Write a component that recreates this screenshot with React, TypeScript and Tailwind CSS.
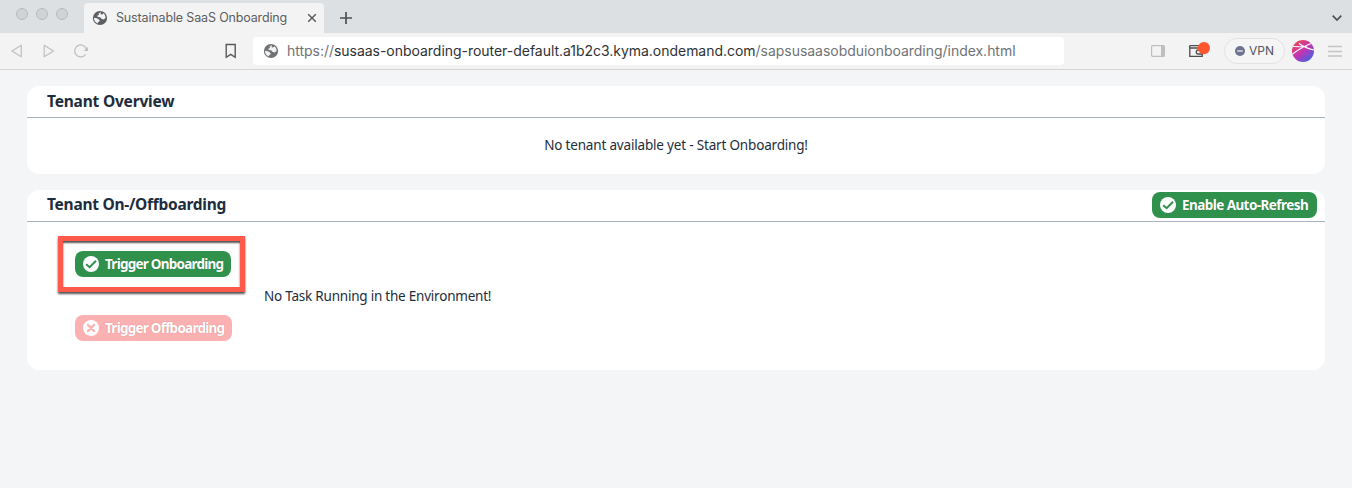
import React from "react";

function Globe({ className }: { className: string }) {
  return (
    <svg viewBox="0 0 16 16" className={className}>
      <circle cx="8" cy="8" r="7.1" fill="currentColor" />
      <path d="M8.8 2.1 L6.5 3.8 L7 5 L5.4 5.6 L5.6 7 L8.2 7.2 L9.4 8.8 L11.4 9.4 L13.7 8 A6 6 0 0 0 11.6 3.2 L10.2 4.6 L8.6 4.2 Z" fill="#f3f3f3" />
      <path d="M2 7.8 L5 8.2 L7.6 10 L7.4 11.6 L6 12.2 L5.8 13.6 A6 6 0 0 1 2 7.8 Z" fill="#f3f3f3" />
    </svg>
  );
}

function StatusIcon({ kind }: { kind: "check" | "cross" }) {
  return (
    <svg viewBox="0 0 16 16" className="size-4 shrink-0">
      <circle cx="8" cy="8" r="8" fill="#fff" />
      {kind === "check" ? (
        <path d="M3.2 8.2 L6.6 11.2 L13 4.8" fill="none" stroke="#30914c" strokeWidth="2" />
      ) : (
        <path d="M5 5 L11 11 M11 5 L5 11" fill="none" stroke="#fbb0b1" strokeWidth="2.4" strokeLinecap="round" />
      )}
    </svg>
  );
}

function ActionButton({ kind, children, className }: { kind: "check" | "cross"; children: string; className: string }) {
  return (
    <button className={`flex h-[26px] items-center gap-1.5 rounded-lg pl-2 text-[13.5px] font-bold whitespace-nowrap text-white [text-shadow:0_0_1px_rgba(0,0,0,0.25)] ${className}`}>
      <StatusIcon kind={kind} />
      <span>{children}</span>
    </button>
  );
}

function TabBar() {
  return (
    <div className="flex h-[33px] bg-[#dce0e3]">
      <div className="flex w-[84px] gap-2 pt-2 pl-4">
        {[0, 1, 2].map((i) => (
          <span key={i} className="size-3 rounded-full border border-[#b9bbbd] bg-[#d1d2d3]" />
        ))}
      </div>
      <div className="mt-[3px] flex h-[30px] w-60 items-center rounded-t bg-[#f3f3f3] pl-2 text-[#5b5e62]">
        <Globe className="size-4" />
        <span className="ml-2 w-[191px] text-[12.5px] tracking-[-0.15px] whitespace-nowrap">Sustainable SaaS Onboarding</span>
        <svg viewBox="0 0 10 10" className="size-[10px]"><path d="M1.2 1.2 L8.8 8.8 M8.8 1.2 L1.2 8.8" stroke="#56595c" strokeWidth="1.4" /></svg>
      </div>
      <svg viewBox="0 0 12 12" className="mt-3 ml-4 size-3"><path d="M6 0 V12 M0 6 H12" stroke="#4d5052" strokeWidth="1.7" /></svg>
      <svg viewBox="0 0 10 6" className="mt-[15px] mr-2.5 ml-auto h-1.5 w-[10px]"><path d="M.7 .7 L5 5 L9.3 .7" fill="none" stroke="#4d5052" strokeWidth="1.7" /></svg>
    </div>
  );
}

function AddressBar() {
  return (
    <div className="flex h-[37px] items-center border-b border-[#d2d4d6] bg-[#f3f3f3]">
      <svg viewBox="0 0 80 16" className="ml-[11px] h-4 w-20 shrink-0" fill="none" stroke="#bfbfbf" strokeWidth="1.2" strokeLinejoin="round">
        <path d="M10.3 2.2 V13.8 L1 8 Z" />
        <path d="M33.2 2.2 V13.8 L42.5 8 Z" />
        <path d="M74.6 11.4 A6 6 0 1 1 75.5 6.5" />
        <path d="M77 3.8 V8 H72.7 Z" fill="#bfbfbf" stroke="none" />
      </svg>
      <svg viewBox="0 0 12 16" className="ml-[134px] h-4 w-3 shrink-0"><path d="M1.2 1.5 H10.2 V14.3 L5.7 11.3 L1.2 14.3 Z" fill="none" stroke="#57595b" strokeWidth="1.4" /></svg>
      <div className="ml-4 flex h-7 w-[811px] items-center rounded bg-white pl-[10px] text-[#707376]">
        <Globe className="size-4" />
        <span className="ml-2 pb-px text-[14px] tracking-[-0.03px] whitespace-nowrap">https://<span className="text-[#2f3235]">susaas-onboarding-router-default.a1b2c3.kyma.ondemand.com</span>/sapsusaasobduionboarding/index.html</span>
      </div>
      <svg viewBox="0 0 14 12" className="ml-[87px] h-3 w-3.5 shrink-0"><rect x=".6" y=".6" width="12.8" height="10.8" rx="1" fill="none" stroke="#bebebe" strokeWidth="1.2" /><path d="M10 1 H13.5 V11 H10 Z" fill="#bebebe" /></svg>
      <svg viewBox="0 0 23 18" className="ml-[23px] h-[18px] w-[23px] shrink-0">
        <path d="M1.8 4.8 V14.4 H14.2 V6 H2.3 Q.8 5 2 3.6 H13" fill="none" stroke="#4d4d4d" strokeWidth="1.3" />
        <path d="M15 8 H10.3 Q8.3 8 8.3 10 T10.3 12 H15" fill="#f3f3f3" stroke="#4d4d4d" strokeWidth="1.3" />
        <circle cx="15.9" cy="6.1" r="6.1" fill="#ff562d" />
      </svg>
      <div className="ml-[13px] flex h-[26px] w-[61px] shrink-0 items-center gap-1 rounded-full border border-[#e2e2e2] bg-[#f5f5f5] pl-[10px] text-[12px] text-[#53565a]">
        <svg viewBox="0 0 10 10" className="size-[10px]"><circle cx="5" cy="5" r="5" fill="#6d7390" /><path d="M2.2 5 H7.8" stroke="#eee" strokeWidth="1.3" /></svg>
        <span>VPN</span>
      </div>
      <svg viewBox="0 0 22 22" className="ml-[7px] size-[22px] shrink-0">
        <defs>
          <linearGradient id="avatar" x1=".15" y1=".1" x2=".85" y2=".95"><stop offset="0" stopColor="#e84a5c" /><stop offset=".48" stopColor="#c334b2" /><stop offset="1" stopColor="#3e63e8" /></linearGradient>
          <clipPath id="disc"><circle cx="11" cy="11" r="11" /></clipPath>
        </defs>
        <g clipPath="url(#disc)"><rect width="22" height="22" fill="url(#avatar)" /><path d="M7 3.5 Q13 8 22 10 M1 6.5 L15 7 M0 14.5 Q8 8 19 3.5" fill="none" stroke="#fff" strokeWidth="1.1" /></g>
      </svg>
      <svg viewBox="0 0 14 12" className="ml-3.5 h-3 w-3.5 shrink-0"><path d="M0 1.5 H14 M0 6.5 H14 M0 11 H14" stroke="#c4c4c4" strokeWidth="1.3" /></svg>
    </div>
  );
}

export default function App() {
  return (
    <div className="h-[488px] overflow-hidden bg-[#f4f5f7] font-['Inter',sans-serif]">
      <TabBar />
      <AddressBar />
      <main className="flex flex-col gap-4 px-[27px] pt-4 font-['Noto_Sans',sans-serif] text-[#1d2d3e]">
        <section className="h-[88px] rounded-xl bg-white">
          <header className="flex h-8 items-center border-b border-[#a9b4be] pl-5">
            <h2 className="text-[15.5px] font-bold tracking-[-0.2px]">Tenant Overview</h2>
          </header>
          <p className="pt-[17px] text-center text-[13.5px] tracking-[-0.18px]">No tenant available yet - Start Onboarding!</p>
        </section>
        <section className="h-[180px] rounded-xl bg-white">
          <header className="flex h-8 items-start justify-between border-b border-[#a9b4be] pr-2 pl-5">
            <h2 className="pt-[3px] text-[15.5px] font-bold tracking-[-0.27px]">Tenant On-/Offboarding</h2>
            <ActionButton kind="check" className="mt-0.5 w-[165px] bg-[#30914c] tracking-[-0.56px]">Enable Auto-Refresh</ActionButton>
          </header>
          <div className="flex pt-[14px] pl-[31px]">
            <div className="w-[188px]">
              <div className="h-14 w-[187px] border-[5px] border-[#ff5a4b] pt-[10px] pl-3 shadow-[0_2px_2px_#555,inset_0_2px_2px_#555]">
                <ActionButton kind="check" className="w-[156px] bg-[#30914c] tracking-[-0.76px]">Trigger Onboarding</ActionButton>
              </div>
              <ActionButton kind="cross" className="mt-[23px] ml-[17px] w-[157px] bg-[#fbb0b1] tracking-[-0.76px]">Trigger Offboarding</ActionButton>
            </div>
            <p className="pt-[50px] pl-[18px] text-[13.5px] tracking-[-0.22px]">No Task Running in the Environment!</p>
          </div>
        </section>
      </main>
    </div>
  );
}
